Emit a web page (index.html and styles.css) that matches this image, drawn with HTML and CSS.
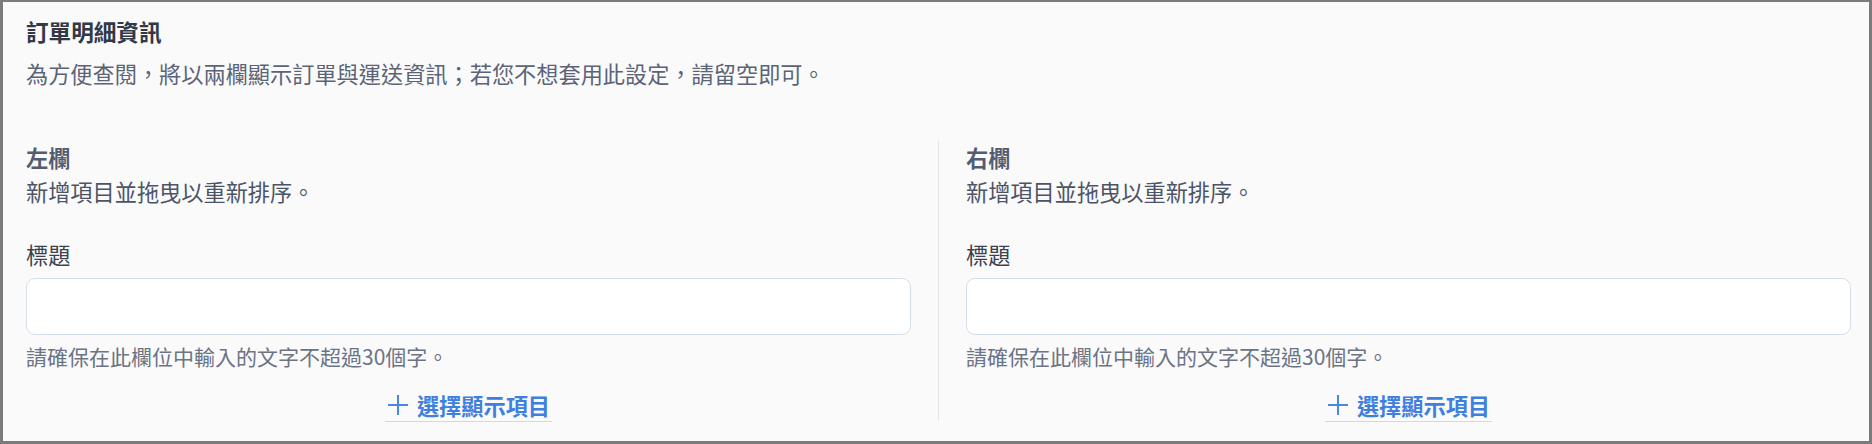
FILE: index.html
```html
<!DOCTYPE html>
<html lang="zh-Hant">
<head>
<meta charset="utf-8">
<title>訂單明細資訊</title>
<link rel="stylesheet" href="styles.css">
</head>
<body>
<section class="panel">
  <header class="panel-head">
    <h1 class="panel-title">訂單明細資訊</h1>
    <p class="panel-desc">為方便查閱，將以兩欄顯示訂單與運送資訊；若您不想套用此設定，請留空即可。</p>
  </header>
  <div class="columns">
    <div class="column">
      <h2 class="col-title">左欄</h2>
      <p class="col-desc">新增項目並拖曳以重新排序。</p>
      <label class="field-label">標題</label>
      <input class="field-input" type="text">
      <p class="field-help">請確保在此欄位中輸入的文字不超過30個字。</p>
      <div class="add-row">
        <button class="add-btn" type="button">
          <svg class="plus" viewBox="0 0 22 22" width="22" height="22"><path d="M11 1v20M1 11h20" stroke="currentColor" stroke-width="2" fill="none"/></svg>
          <span>選擇顯示項目</span>
        </button>
      </div>
    </div>
    <div class="divider"></div>
    <div class="column">
      <h2 class="col-title">右欄</h2>
      <p class="col-desc">新增項目並拖曳以重新排序。</p>
      <label class="field-label">標題</label>
      <input class="field-input" type="text">
      <p class="field-help">請確保在此欄位中輸入的文字不超過30個字。</p>
      <div class="add-row">
        <button class="add-btn" type="button">
          <svg class="plus" viewBox="0 0 22 22" width="22" height="22"><path d="M11 1v20M1 11h20" stroke="currentColor" stroke-width="2" fill="none"/></svg>
          <span>選擇顯示項目</span>
        </button>
      </div>
    </div>
  </div>
</section>
</body>
</html>
```

FILE: styles.css
```css
html, body {
  margin: 0;
  padding: 0;
}
body {
  font-family: "Noto Sans CJK TC", "Noto Sans", sans-serif;
  background: #fafafa;
}
.panel {
  box-sizing: border-box;
  width: 1872px;
  height: 444px;
  border-style: solid;
  border-color: #7b7b7b;
  border-width: 2px 3px 3px 3px;
  background: #fafafa;
  padding: 14px 18px 0 23px;
}
.panel-title {
  margin: 0;
  font-size: 22.6px;
  line-height: 32px;
  font-weight: 700;
  color: #313846;
}
.panel-desc {
  margin: 9px 0 0;
  font-size: 22.2px;
  line-height: 32px;
  color: #5a6377;
}
.columns {
  display: flex;
  margin-top: 52px;
  gap: 27px;
}
.column {
  flex: 1;
  display: flex;
  flex-direction: column;
}
.divider {
  width: 1px;
  background: #e3e3e3;
  height: 279px;
}
.col-title {
  margin: 0;
  font-size: 22.2px;
  line-height: 32px;
  font-weight: 700;
  color: #535d72;
}
.col-desc {
  margin: 2px 0 0;
  font-size: 22.2px;
  line-height: 32px;
  color: #4b5467;
}
.field-label {
  margin-top: 31px;
  font-size: 22.2px;
  line-height: 32px;
  color: #3a414f;
}
.field-input {
  box-sizing: border-box;
  margin-top: 8px;
  height: 57px;
  width: 100%;
  border: 1px solid #d6dee9;
  border-radius: 9px;
  background: #ffffff;
  outline: none;
}
.field-help {
  margin: 6px 0 0;
  font-size: 21px;
  line-height: 30px;
  color: #6b7384;
}
.add-row {
  display: flex;
  justify-content: center;
  margin-top: 18px;
}
.add-btn {
  display: flex;
  align-items: center;
  gap: 8px;
  padding: 0 2px;
  background: none;
  border: none;
  border-bottom: 1px solid #cbd9f4;
  font-family: inherit;
  font-size: 22.2px;
  line-height: 32px;
  font-weight: 700;
  color: #3f7fe0;
  cursor: pointer;
}
.plus {
  display: block;
  color: #4a86e4;
}
```
